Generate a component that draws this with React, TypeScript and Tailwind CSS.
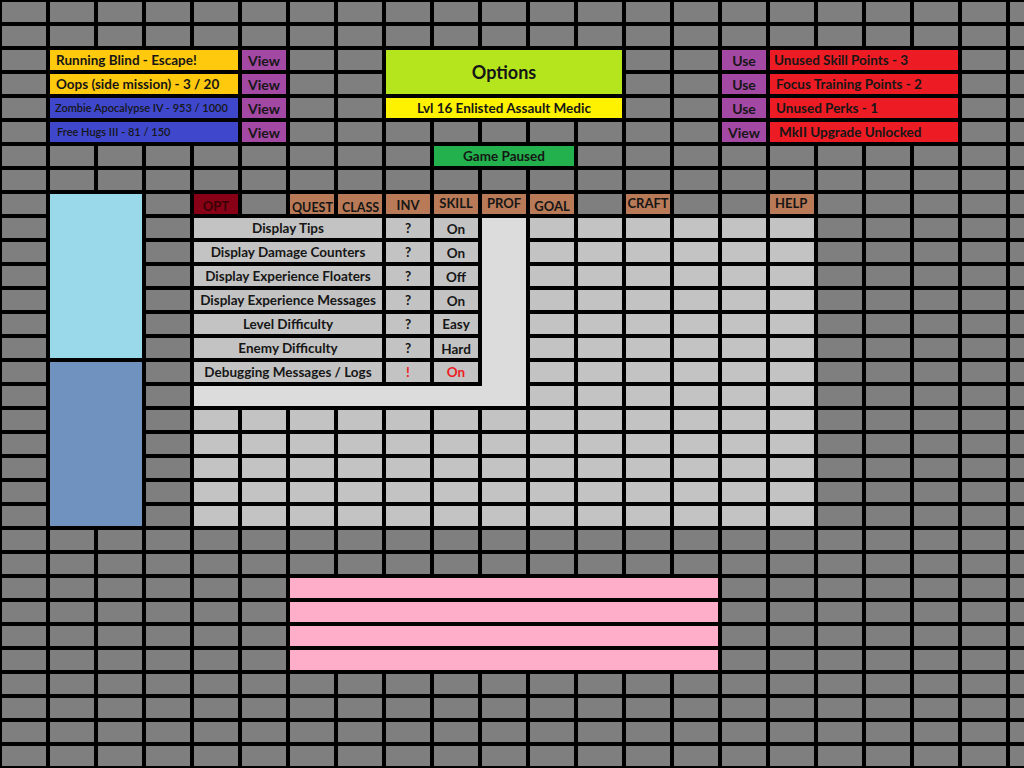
import type { ReactNode } from "react";

type Item = {
  a: [number, number, number, number]; // col, row, width, height (0-based cells)
  pos: string;
  cls: string;
  children?: ReactNode;
};

const ROWS = 32;
const COLS = 22;

const label = "flex items-center whitespace-nowrap overflow-hidden font-bold text-[#161616]";
const btn = "flex items-center justify-center font-bold text-[14px] text-[#161616] bg-[#a349a4]";

const optionRows = [
  { name: "Display Tips", value: "On", pos: "row-start-10", r: 9, vAlign: "items-end" },
  { name: "Display Damage Counters", value: "On", pos: "row-start-11", r: 10, vAlign: "items-end" },
  { name: "Display Experience Floaters", value: "Off", pos: "row-start-12", r: 11, vAlign: "items-end" },
  { name: "Display Experience Messages", value: "On", pos: "row-start-13", r: 12, vAlign: "items-end" },
  { name: "Level Difficulty", value: "Easy", pos: "row-start-14", r: 13, vAlign: "items-center" },
  { name: "Enemy Difficulty", value: "Hard", pos: "row-start-15", r: 14, vAlign: "items-end" },
  { name: "Debugging Messages / Logs", value: "On", pos: "row-start-16", r: 15, vAlign: "items-center", warn: true },
];

const items: Item[] = [
  // quest tracker, left
  { a: [1, 2, 4, 1], pos: "col-start-2 col-span-4 row-start-3", cls: `${label} bg-[#ffc90e] pl-[6px] text-[13.5px]`, children: "Running Blind - Escape!" },
  { a: [1, 3, 4, 1], pos: "col-start-2 col-span-4 row-start-4", cls: `${label} bg-[#ffc90e] pl-[6px] text-[13.5px] !items-end`, children: "Oops (side mission) - 3 / 20" },
  { a: [1, 4, 4, 1], pos: "col-start-2 col-span-4 row-start-5", cls: `${label} bg-[#3f48cc] pl-[5px] text-[11px] !font-semibold`, children: "Zombie Apocalypse IV - 953 / 1000" },
  { a: [1, 5, 4, 1], pos: "col-start-2 col-span-4 row-start-6", cls: `${label} bg-[#3f48cc] pl-[7px] text-[11px] !font-semibold`, children: "Free Hugs III - 81 / 150" },
  { a: [5, 2, 1, 1], pos: "col-start-6 row-start-3", cls: btn, children: "View" },
  { a: [5, 3, 1, 1], pos: "col-start-6 row-start-4", cls: btn, children: "View" },
  { a: [5, 4, 1, 1], pos: "col-start-6 row-start-5", cls: btn, children: "View" },
  { a: [5, 5, 1, 1], pos: "col-start-6 row-start-6", cls: btn, children: "View" },

  // title block
  { a: [8, 2, 5, 2], pos: "col-start-9 col-span-5 row-start-3 row-span-2", cls: "flex items-center justify-center bg-[#b5e61d] font-bold text-[18px] text-[#161616]", children: "Options" },
  { a: [8, 4, 5, 1], pos: "col-start-9 col-span-5 row-start-5", cls: "flex items-center justify-center bg-[#fff200] font-bold text-[13.5px] text-[#161616] whitespace-nowrap", children: "Lvl 16 Enlisted Assault Medic" },
  { a: [9, 6, 3, 1], pos: "col-start-10 col-span-3 row-start-7", cls: "flex items-center justify-center bg-[#22b14c] font-bold text-[13.5px] text-[#161616]", children: "Game Paused" },

  // notifications, right
  { a: [15, 2, 1, 1], pos: "col-start-16 row-start-3", cls: btn, children: "Use" },
  { a: [15, 3, 1, 1], pos: "col-start-16 row-start-4", cls: btn, children: "Use" },
  { a: [15, 4, 1, 1], pos: "col-start-16 row-start-5", cls: btn, children: "Use" },
  { a: [15, 5, 1, 1], pos: "col-start-16 row-start-6", cls: btn, children: "View" },
  { a: [16, 2, 4, 1], pos: "col-start-17 col-span-4 row-start-3", cls: `${label} bg-[#ed1c24] pl-[4px] text-[13.5px]`, children: "Unused Skill Points - 3" },
  { a: [16, 3, 4, 1], pos: "col-start-17 col-span-4 row-start-4", cls: `${label} bg-[#ed1c24] pl-[6px] text-[13.5px]`, children: "Focus Training Points - 2" },
  { a: [16, 4, 4, 1], pos: "col-start-17 col-span-4 row-start-5", cls: `${label} bg-[#ed1c24] pl-[6px] text-[13.5px]`, children: "Unused Perks - 1" },
  { a: [16, 5, 4, 1], pos: "col-start-17 col-span-4 row-start-6", cls: `${label} bg-[#ed1c24] pl-[9px] text-[13.5px]`, children: "MkII Upgrade Unlocked" },

  // side panels
  { a: [1, 8, 2, 7], pos: "col-start-2 col-span-2 row-start-9 row-span-7", cls: "bg-[#99d9ea]" },
  { a: [1, 15, 2, 7], pos: "col-start-2 col-span-2 row-start-16 row-span-7", cls: "bg-[#7092be]" },

  // tabs
  { a: [4, 8, 1, 1], pos: "col-start-5 row-start-9", cls: "flex items-end justify-center bg-[#880015] text-[13px] font-bold text-[#3a0008] leading-none pb-[1px]", children: "OPT" },
  { a: [6, 8, 1, 1], pos: "col-start-7 row-start-9", cls: "flex items-end overflow-hidden bg-[#b97a57] text-[12.5px] font-bold text-[#161616] leading-none pl-[2px] whitespace-nowrap", children: "QUEST" },
  { a: [7, 8, 1, 1], pos: "col-start-8 row-start-9", cls: "flex items-end overflow-hidden bg-[#b97a57] text-[12.5px] font-bold text-[#161616] leading-none pl-[4px] whitespace-nowrap", children: "CLASS" },
  { a: [8, 8, 1, 1], pos: "col-start-9 row-start-9", cls: "flex items-end justify-center bg-[#b97a57] text-[13px] font-bold text-[#161616] leading-none pb-[2px]", children: "INV" },
  { a: [9, 8, 1, 1], pos: "col-start-10 row-start-9", cls: "flex items-center justify-center bg-[#b97a57] text-[13px] font-bold text-[#161616]", children: "SKILL" },
  { a: [10, 8, 1, 1], pos: "col-start-11 row-start-9", cls: "flex items-center justify-center bg-[#b97a57] text-[13px] font-bold text-[#161616]", children: "PROF" },
  { a: [11, 8, 1, 1], pos: "col-start-12 row-start-9", cls: "flex items-end justify-center bg-[#b97a57] text-[13px] font-bold text-[#161616] leading-none pb-[1px]", children: "GOAL" },
  { a: [13, 8, 1, 1], pos: "col-start-14 row-start-9", cls: "flex items-center justify-center bg-[#b97a57] text-[13px] font-bold text-[#161616]", children: "CRAFT" },
  { a: [16, 8, 1, 1], pos: "col-start-17 row-start-9", cls: "flex items-center bg-[#b97a57] text-[13px] font-bold text-[#161616] pl-[5px]", children: "HELP" },

  // options table frame (L shaped merged area)
  { a: [10, 9, 1, 7], pos: "col-start-11 row-start-10 row-span-7", cls: "bg-[#dcdcdc] -mb-[4px]" },
  { a: [4, 16, 7, 1], pos: "col-start-5 col-span-7 row-start-17", cls: "bg-[#dcdcdc]" },

  // pink bars
  { a: [6, 24, 9, 1], pos: "col-start-7 col-span-9 row-start-25", cls: "bg-[#ffaec9]" },
  { a: [6, 25, 9, 1], pos: "col-start-7 col-span-9 row-start-26", cls: "bg-[#ffaec9]" },
  { a: [6, 26, 9, 1], pos: "col-start-7 col-span-9 row-start-27", cls: "bg-[#ffaec9]" },
  { a: [6, 27, 9, 1], pos: "col-start-7 col-span-9 row-start-28", cls: "bg-[#ffaec9]" },
];

for (const o of optionRows) {
  items.push(
    {
      a: [4, o.r, 4, 1],
      pos: `col-start-5 col-span-4 ${o.pos}`,
      cls: "flex items-center justify-center bg-[#c3c3c3] text-[13.5px] font-bold text-[#161616] whitespace-nowrap overflow-hidden",
      children: o.name,
    },
    {
      a: [8, o.r, 1, 1],
      pos: `col-start-9 ${o.pos}`,
      cls: `flex items-start justify-center bg-[#c3c3c3] text-[13.5px] font-bold ${o.warn ? "text-[#ed1c24] items-center" : "text-[#161616]"}`,
      children: o.warn ? "!" : "?",
    },
    {
      a: [9, o.r, 1, 1],
      pos: `col-start-10 ${o.pos}`,
      cls: `flex ${o.vAlign} justify-center bg-[#c3c3c3] text-[13.5px] font-bold leading-[18px] ${o.warn ? "text-[#ed1c24]" : "text-[#161616]"}`,
      children: o.value,
    }
  );
}

function isLight(r: number, c: number) {
  if (r >= 9 && r <= 21 && c >= 11 && c <= 16) return true;
  if (r >= 17 && r <= 21 && c >= 4 && c <= 10) return true;
  return false;
}

export default function App() {
  const taken: boolean[][] = Array.from({ length: ROWS }, () => Array(COLS).fill(false));
  for (const it of items) {
    const [c, r, w, h] = it.a;
    for (let y = r; y < r + h; y++) for (let x = c; x < c + w; x++) taken[y][x] = true;
  }

  // free cells get auto-placed in row order, so their colour follows the same walk
  const fillers: string[] = [];
  for (let r = 0; r < ROWS; r++) {
    for (let c = 0; c < COLS; c++) {
      if (!taken[r][c]) fillers.push(isLight(r, c) ? "bg-[#c3c3c3]" : "bg-[#7f7f7f]");
    }
  }

  return (
    <div className="w-[1024px] h-[768px] overflow-hidden bg-black font-['Lato',sans-serif]">
      <div className="grid grid-cols-[repeat(22,44px)] grid-rows-[repeat(32,20px)] gap-[4px] p-[2px]">
        {items.map((it, i) => (
          <div key={i} className={`${it.pos} ${it.cls}`}>
            {it.children}
          </div>
        ))}
        {fillers.map((f, i) => (
          <div key={`f${i}`} className={f} />
        ))}
      </div>
    </div>
  );
}
